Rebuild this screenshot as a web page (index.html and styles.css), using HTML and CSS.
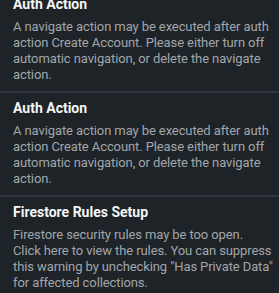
FILE: index.html
```html
<!DOCTYPE html>
<html>
<head>
<meta charset="utf-8">
<link rel="stylesheet" href="styles.css">
</head>
<body>
<div class="list">
  <div class="item">
    <div class="title">Auth Action</div>
    <div class="desc">A navigate action may be executed after auth action Create Account. Please either turn off automatic navigation, or delete the navigate action.</div>
  </div>
  <div class="item">
    <div class="title">Auth Action</div>
    <div class="desc">A navigate action may be executed after auth action Create Account. Please either turn off automatic navigation, or delete the navigate action.</div>
  </div>
  <div class="item">
    <div class="title">Firestore Rules Setup</div>
    <div class="desc">Firestore security rules may be too open.<br>Click here to view the rules. You can suppress<br>this warning by unchecking "Has Private Data"<br>for affected collections.</div>
  </div>
</div>
</body>
</html>
```
FILE: styles.css
```css
html, body {
  margin: 0;
  padding: 0;
  background: #1d2327;
  overflow: hidden;
}
.list {
  margin-top: -11px;
  font-family: Roboto, "Liberation Sans", sans-serif;
}
.item {
  padding: 6px 0 8px 13px;
  border-bottom: 2px solid #2e343b;
}
.title {
  font-size: 14px;
  line-height: 18px;
  font-weight: 700;
  color: #f4f5f6;
  margin-bottom: 6px;
}
.desc {
  font-size: 13px;
  line-height: 16px;
  letter-spacing: -0.1px;
  color: #a2a6ab;
  max-width: 257px;
}
.item:last-child .desc {
  max-width: none;
  white-space: nowrap;
}
```
